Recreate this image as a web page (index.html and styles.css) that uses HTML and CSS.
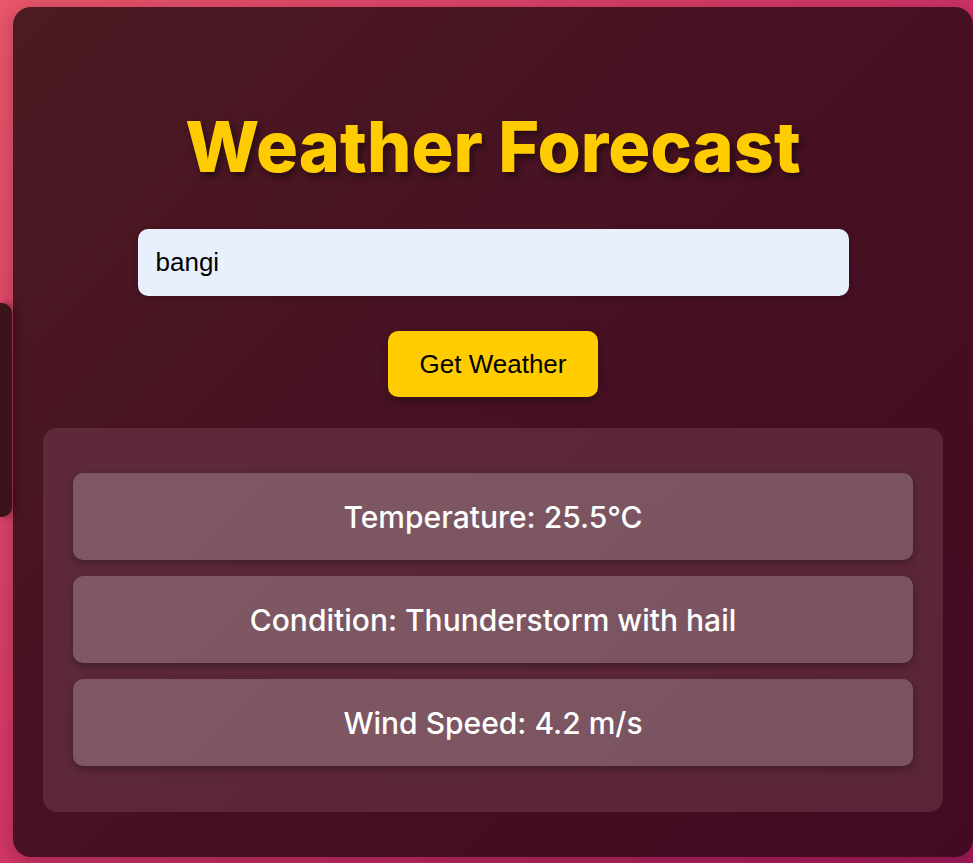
FILE: index.html
```html
<!DOCTYPE html>
<html lang="en">
<head>
<meta charset="utf-8">
<title>Weather Forecast</title>
<link rel="stylesheet" href="styles.css">
</head>
<body>
<div class="side-tab"></div>
<main class="card">
  <h1 class="title">Weather Forecast</h1>
  <div class="search">
    <input class="city-input" type="text" value="bangi">
    <button class="get-btn" type="button">Get Weather</button>
  </div>
  <section class="results">
    <div class="result-item">Temperature: 25.5°C</div>
    <div class="result-item">Condition: Thunderstorm with hail</div>
    <div class="result-item">Wind Speed: 4.2 m/s</div>
  </section>
</main>
</body>
</html>
```
FILE: styles.css
```css
* { box-sizing: border-box; }
html, body { height: 100%; }
body {
  margin: 0;
  padding: 7px 0 6px 13px;
  background: linear-gradient(135deg, #ea566b 0%, #cf3466 50%, #a5195a 100%);
  font-family: "Inter", "Liberation Sans", sans-serif;
  overflow: hidden;
}
.side-tab {
  position: fixed;
  left: 0;
  top: 303px;
  width: 12px;
  height: 214px;
  background: #3a131b;
  border-radius: 0 10px 10px 0;
  box-shadow: 3px 0 8px rgba(0,0,0,0.35);
  z-index: 2;
}
.card {
  width: 960px;
  background: linear-gradient(135deg, #4b1a22 0%, #460f22 60%, #440a22 100%);
  border-radius: 18px;
  padding: 95px 30px 45px;
  display: flex;
  flex-direction: column;
  align-items: center;
  box-shadow: 0 4px 20px rgba(0,0,0,0.25);
}
.title {
  margin: 0;
  font-size: 70px;
  font-weight: 800;
  line-height: 90px;
  color: #ffcc00;
  text-shadow: 3px 4px 6px rgba(0,0,0,0.45);
}
.search {
  margin-top: 37px;
  display: flex;
  flex-direction: column;
  align-items: center;
  gap: 35px;
  width: 100%;
}
.city-input {
  width: 711px;
  height: 67px;
  border: none;
  border-radius: 10px;
  background: #e8f0fe;
  padding: 0 18px;
  font-family: "Liberation Sans", Arial, sans-serif;
  font-size: 26px;
  color: #000;
  outline: none;
  box-shadow: 0 2px 6px rgba(0,0,0,0.2);
}
.get-btn {
  width: 210px;
  height: 66px;
  border: none;
  border-radius: 10px;
  background: #ffcc00;
  font-family: "Liberation Sans", Arial, sans-serif;
  font-size: 26px;
  color: #000;
  box-shadow: 0 4px 10px rgba(0,0,0,0.3);
}
.results {
  margin-top: 31px;
  width: 100%;
  background: linear-gradient(135deg, #5e2a39 0%, #5a2538 100%);
  border-radius: 14px;
  padding: 45px 30px 46px;
  display: flex;
  flex-direction: column;
  gap: 16px;
}
.result-item {
  height: 87px;
  border-radius: 10px;
  background: linear-gradient(135deg, #7e5862 0%, #7a5361 100%);
  box-shadow: 0 3px 8px rgba(0,0,0,0.3);
  display: flex;
  align-items: center;
  justify-content: center;
  color: #fff;
  font-size: 30px;
  font-weight: 500;
}
```
